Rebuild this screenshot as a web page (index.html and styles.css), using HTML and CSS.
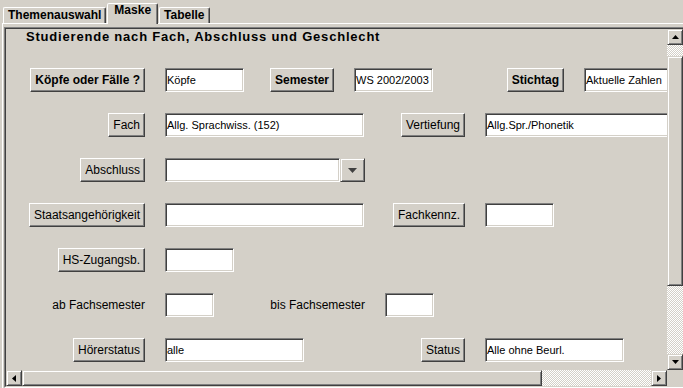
FILE: index.html
```html
<!DOCTYPE html>
<html lang="de">
<head>
  <meta charset="UTF-8">
  <title>Maske - Studierende</title>
  <link rel="stylesheet" href="styles.css">
</head>
<body>

<div class="tabs">
  <div class="tab">Themenauswahl</div>
  <div class="tab active">Maske</div>
  <div class="tab">Tabelle</div>
</div>

<div class="tabpanel">
  <div class="scrollpane">
    <div class="scrollpane-in">
      <div class="viewport">
        <h1 class="title">Studierende nach Fach, Abschluss und Geschlecht</h1>

        <div class="form">
          <div class="row">
            <div class="cell lead"><button class="btn strong">Köpfe oder Fälle ?</button></div>
            <div class="field w79">Köpfe</div>
            <div class="cell c-sem"><button class="btn strong">Semester</button></div>
            <div class="field w79">WS 2002/2003</div>
            <div class="cell c-stich"><button class="btn strong">Stichtag</button></div>
            <div class="field wide">Aktuelle Zahlen</div>
          </div>

          <div class="row">
            <div class="cell lead"><button class="btn">Fach</button></div>
            <div class="field w199">Allg. Sprachwiss. (152)</div>
            <div class="cell c-right"><button class="btn">Vertiefung</button></div>
            <div class="field wide">Allg.Spr./Phonetik</div>
          </div>

          <div class="row">
            <div class="cell lead"><button class="btn">Abschluss</button></div>
            <div class="combo">
              <div class="field"></div>
              <div class="drop raised">
                <svg width="9" height="5" viewBox="0 0 9 5"><polygon points="0,0 9,0 4.5,5" fill="#404040"/></svg>
              </div>
            </div>
          </div>

          <div class="row">
            <div class="cell lead"><button class="btn">Staatsangehörigkeit</button></div>
            <div class="field w199"></div>
            <div class="cell c-right"><button class="btn">Fachkennz.</button></div>
            <div class="field w69"></div>
          </div>

          <div class="row">
            <div class="cell lead"><button class="btn">HS-Zugangsb.</button></div>
            <div class="field w69"></div>
          </div>

          <div class="row">
            <div class="cell lead"><span class="label">ab Fachsemester</span></div>
            <div class="field w49"></div>
            <div class="cell c-bis"><span class="label">bis Fachsemester</span></div>
            <div class="field w49"></div>
          </div>

          <div class="row">
            <div class="cell lead"><button class="btn">Hörerstatus</button></div>
            <div class="field w139">alle</div>
            <div class="cell c-status"><button class="btn">Status</button></div>
            <div class="field w139">Alle ohne Beurl.</div>
          </div>
        </div>
      </div>

      <!-- vertical scrollbar -->
      <div class="vscroll">
        <div class="sbtn raised">
          <svg width="7" height="4" viewBox="0 0 7 4"><polygon points="3.5,0 7,4 0,4" fill="#000"/></svg>
        </div>
        <div class="track">
          <div class="thumb raised"></div>
        </div>
        <div class="sbtn raised">
          <svg width="7" height="4" viewBox="0 0 7 4"><polygon points="0,0 7,0 3.5,4" fill="#000"/></svg>
        </div>
      </div>

      <!-- horizontal scrollbar -->
      <div class="hscroll">
        <div class="sbtn raised">
          <svg width="4" height="7" viewBox="0 0 4 7"><polygon points="4,0 4,7 0,3.5" fill="#000"/></svg>
        </div>
        <div class="track">
          <div class="thumb raised"></div>
        </div>
        <div class="sbtn raised">
          <svg width="4" height="7" viewBox="0 0 4 7"><polygon points="0,0 4,3.5 0,7" fill="#000"/></svg>
        </div>
      </div>

      <div class="corner"></div>
    </div>
  </div>
</div>

</body>
</html>
```

FILE: styles.css
```css
* {
  box-sizing: border-box;
}

body {
  margin: 0;
  width: 683px;
  height: 388px;
  overflow: hidden;
  background: #d4d0c8;
  color: #000;
  font-family: 'Liberation Sans', Arial, sans-serif;
}

/* tab strip */
.tabs {
  display: flex;
  align-items: flex-end;
  gap: 1px;
  height: 23px;
  padding-left: 3px;
}

.tab {
  height: 16px;
  padding: 0 4px;
  font-size: 12px;
  font-weight: bold;
  line-height: 14px;
  border: 1px solid;
  border-bottom: none;
  border-color: #fff #404040 transparent #fff;
  border-radius: 2px 2px 0 0;
  box-shadow: inset -1px 0 #808080;
}

.tab.active {
  position: relative;
  z-index: 1;
  height: 21px;
  margin-bottom: -1px;
  padding: 0 6px;
  background: #d4d0c8;
  line-height: 13px;
}

.tabpanel {
  margin-left: 2px;
  padding: 3px 0 0 1px;
  border-top: 1px solid #fff;
  border-left: 1px solid #fff;
}

/* scroll pane */
.scrollpane {
  width: 681px;
  border: 1px solid;
  border-color: #808080 #fff #fff #808080;
}

.scrollpane-in {
  display: grid;
  grid-template-columns: 661px 16px;
  grid-template-rows: 341px 16px;
  border: 1px solid;
  border-color: #404040 #d4d0c8 #d4d0c8 #404040;
}

.viewport {
  overflow: hidden;
}

.title {
  margin: 0 0 24px 20px;
  font-size: 13px;
  font-weight: bold;
  line-height: 15px;
  letter-spacing: 0.8px;
  white-space: nowrap;
}

/* form rows */
.form {
  display: flex;
  flex-direction: column;
  gap: 21px;
}

.row {
  display: flex;
  align-items: center;
  height: 24px;
  white-space: nowrap;
}

.cell {
  flex: none;
  display: flex;
  justify-content: flex-end;
  margin-right: 20px;
}

.lead { width: 139px; }
.c-sem { width: 90px; }
.c-stich { width: 131px; }
.c-right { width: 101px; }
.c-bis { width: 151px; }
.c-status { width: 161px; }

.btn {
  height: 24px;
  padding: 0 4px;
  background: #d4d0c8;
  color: #000;
  font: 12px 'Liberation Sans', Arial, sans-serif;
  border: 1px solid;
  border-color: #fff #404040 #404040 #fff;
  box-shadow: inset -1px -1px #808080;
}

.btn.strong {
  font-weight: bold;
}

.label {
  font-size: 12px;
}

.field {
  flex: none;
  height: 24px;
  padding: 0 1px;
  background: #fff;
  font-size: 11px;
  line-height: 22px;
  overflow: hidden;
  border: 1px solid;
  border-color: #808080 #fff #fff #808080;
  box-shadow: inset 1px 1px #404040, inset -1px -1px #d4d0c8;
}

.w49 { width: 49px; }
.w69 { width: 69px; }
.w79 { width: 79px; }
.w139 { width: 139px; }
.w199 { width: 199px; }
.wide { width: 190px; }

.combo {
  display: flex;
  width: 200px;
}

.combo .field {
  width: 175px;
}

.drop {
  width: 25px;
  height: 24px;
  display: flex;
  align-items: center;
  justify-content: center;
  background: #d4d0c8;
}

.raised {
  border: 1px solid;
  border-color: #d4d0c8 #404040 #404040 #d4d0c8;
  box-shadow: inset 1px 1px #fff, inset -1px -1px #808080;
}

/* scrollbars */
.vscroll,
.hscroll {
  display: flex;
}

.vscroll {
  flex-direction: column;
}

.sbtn {
  flex: none;
  width: 16px;
  height: 16px;
  display: flex;
  align-items: center;
  justify-content: center;
  background: #d4d0c8;
}

.track {
  flex: 1;
  display: flex;
  background: repeating-conic-gradient(#d4d0c8 0 25%, #fff 0 50%) 0 0 / 2px 2px;
}

.vscroll .track {
  flex-direction: column;
}

.thumb {
  flex: none;
  background: #d4d0c8;
}

.vscroll .thumb {
  margin-top: 11px;
  height: 230px;
}

.hscroll .thumb {
  width: 520px;
}

.corner {
  background: #d4d0c8;
}
```
